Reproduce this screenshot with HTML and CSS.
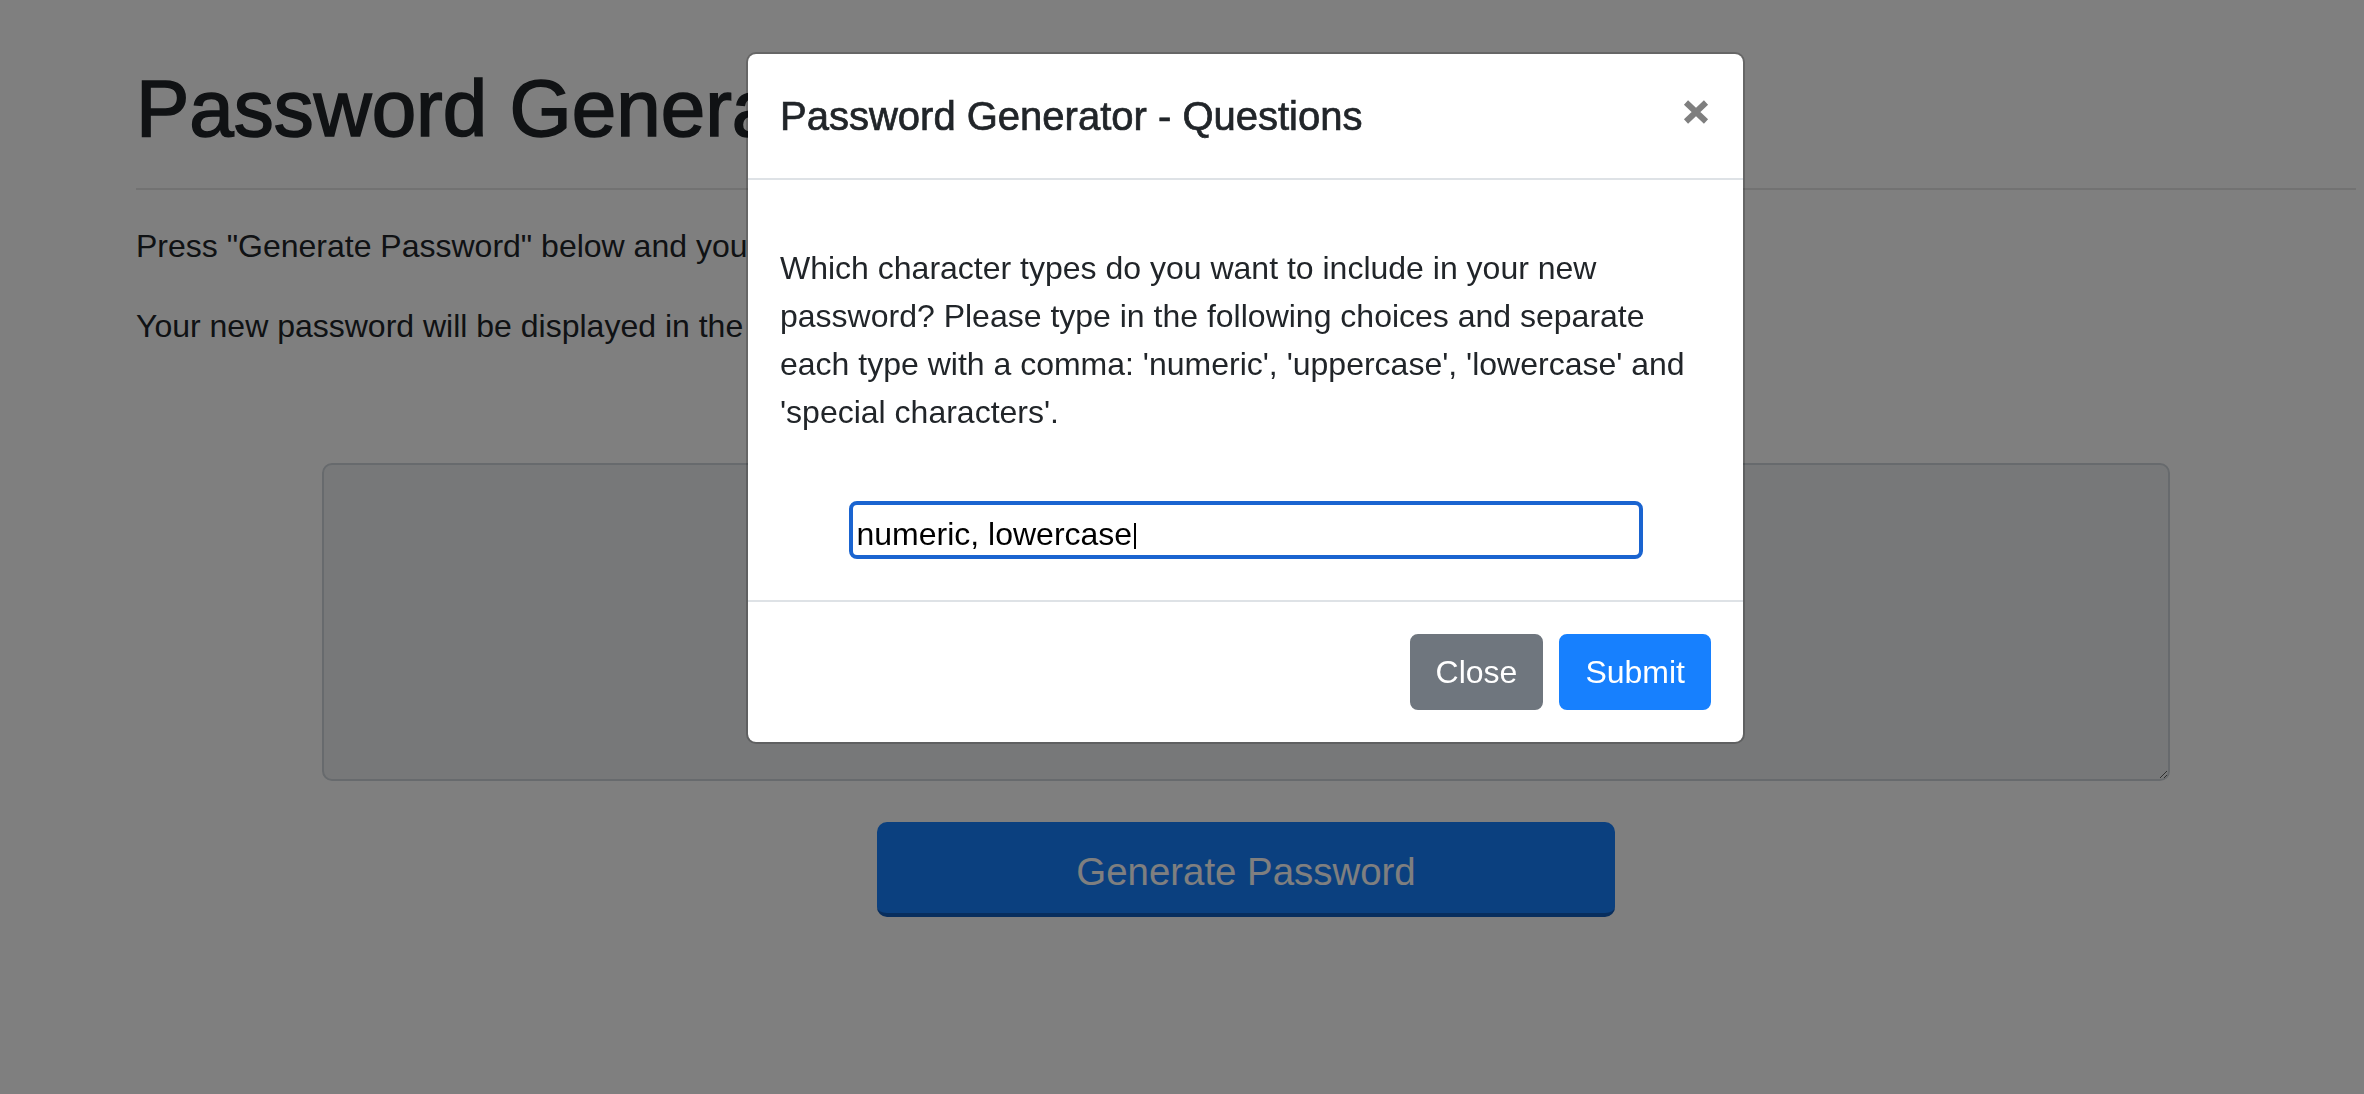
FILE: index.html
```html
<!DOCTYPE html>
<html lang="en">
<head>
<meta charset="utf-8">
<title>Password Generator</title>
<link rel="stylesheet" href="styles.css">
</head>
<body>
<div class="container">
  <h1 class="title">Password Generator</h1>
  <hr class="rule">
  <p class="lead-text">Press "Generate Password" below and you will be asked a few questions about your new password.</p>
  <p class="lead-text">Your new password will be displayed in the box below.</p>
  <div class="output-wrap">
    <textarea class="output" readonly aria-label="Generated password"></textarea>
  </div>
  <div class="generate-wrap">
    <button class="btn-generate" type="button">Generate Password</button>
  </div>
</div>

<div class="backdrop"></div>

<div class="modal">
  <div class="modal-dialog">
    <div class="modal-header">
      <h5 class="modal-title">Password Generator - Questions</h5>
      <button class="close" type="button" aria-label="Close">
        <svg width="26" height="24" viewBox="0 0 26 24"><path d="M3 2.5 L23 21.5 M23 2.5 L3 21.5" stroke="#7f7f7f" stroke-width="6" fill="none"/></svg>
      </button>
    </div>
    <div class="modal-body">
      <p class="question">Which character types do you want to include in your new password? Please type in the following choices and separate each type with a comma: 'numeric', 'uppercase', 'lowercase' and 'special characters'.</p>
      <div class="field-row">
        <div class="field">
          <input class="answer" type="text" value="numeric, lowercase">
          <span class="caret"></span>
        </div>
      </div>
    </div>
    <div class="modal-footer">
      <button class="btn btn-secondary" type="button">Close</button>
      <button class="btn btn-primary" type="button">Submit</button>
    </div>
  </div>
</div>
</body>
</html>
```

FILE: styles.css
```css
* {
  box-sizing: border-box;
}

html,
body {
  margin: 0;
  padding: 0;
}

body {
  font-family: "Liberation Sans", Arial, Helvetica, sans-serif;
  font-size: 32px;
  line-height: 48px;
  color: #212529;
  background: #ffffff;
  height: 1094px;
  overflow: hidden;
}

.container {
  width: 2280px;
  margin-left: 106px;
  padding: 61px 30px 0;
}

.title {
  margin: 0;
  font-size: 80px;
  line-height: 96px;
  font-weight: 500;
  -webkit-text-stroke: 1.6px #212529;
}

.rule {
  margin: 31px 0 32px;
  border: 0;
  border-top: 2px solid rgba(0, 0, 0, 0.1);
  height: 0;
}

.lead-text {
  margin: 0 0 32px;
}

.output-wrap {
  padding-top: 81px;
}

.output {
  display: block;
  width: 1848px;
  height: 318px;
  margin: 0 auto;
  border: 2px solid #ced4da;
  border-radius: 10px;
  background: #eef0f2;
  font-family: "Liberation Sans", Arial, sans-serif;
  font-size: 32px;
}

.generate-wrap {
  padding-top: 41px;
}

.btn-generate {
  display: block;
  width: 738px;
  height: 95px;
  margin: 0 auto;
  padding: 8px 0 0;
  border: 0;
  border-bottom: 4px solid #105cbc;
  border-radius: 10px;
  background: #1780fe;
  color: #ffffff;
  font-family: "Liberation Sans", Arial, sans-serif;
  font-size: 38.4px;
}

.backdrop {
  position: fixed;
  inset: 0;
  background: rgba(0, 0, 0, 0.5);
}

.modal {
  position: fixed;
  inset: 0;
}

.modal-dialog {
  width: 999px;
  margin: 52px 0 0 746px;
  background: #ffffff;
  background-clip: padding-box;
  border: 2px solid rgba(0, 0, 0, 0.2);
  border-radius: 10px;
}

.modal-header {
  display: flex;
  justify-content: space-between;
  align-items: flex-start;
  padding: 32px;
  border-bottom: 2px solid #dee2e6;
}

.modal-title {
  margin: 0;
  font-size: 40px;
  line-height: 60px;
  font-weight: 500;
  -webkit-text-stroke: 0.7px #212529;
}

.close {
  display: flex;
  padding: 14px 0 0;
  margin: 0 2px 0 0;
  border: 0;
  background: transparent;
}

.modal-body {
  padding: 32px 26px 32px 32px;
}

.question {
  margin: 32px 0;
}

.field-row {
  display: flex;
  justify-content: center;
  margin-right: 6px;
  padding: 33px 0 9px;
}

.field {
  position: relative;
  width: 794px;
}

.answer {
  display: block;
  width: 100%;
  height: 58px;
  padding: 8px 4px 0;
  border: 4px solid #1a64d0;
  border-radius: 8px;
  outline: none;
  background: #ffffff;
  color: #000000;
  font-family: "Liberation Sans", Arial, sans-serif;
  font-size: 32px;
}

.caret {
  position: absolute;
  left: 285px;
  top: 22px;
  width: 2px;
  height: 26px;
  background: #000000;
}

.modal-footer {
  display: flex;
  justify-content: flex-end;
  align-items: center;
  padding: 24px;
  border-top: 2px solid #dee2e6;
}

.btn {
  height: 76px;
  margin: 8px;
  padding: 0 24px;
  border: 2px solid transparent;
  border-radius: 8px;
  color: #ffffff;
  font-family: "Liberation Sans", Arial, sans-serif;
  font-size: 32px;
}

.btn-secondary {
  background: #6f767e;
  border-color: #6f767e;
}

.btn-primary {
  background: #1780fe;
  border-color: #1780fe;
}
```
